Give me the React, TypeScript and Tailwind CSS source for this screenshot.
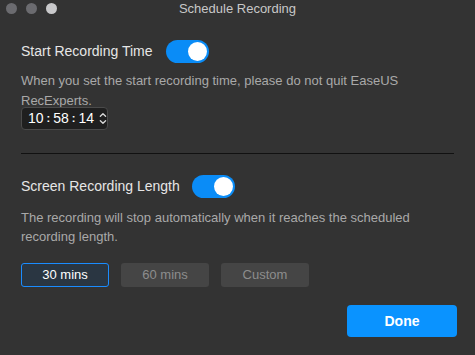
import React from "react"

function Toggle() {
  return (
    <div className="w-[43px] h-[23px] rounded-full bg-[#0a8cf7] flex items-center justify-end pr-[2px]">
      <div className="w-[19px] h-[19px] rounded-full bg-white" />
    </div>
  )
}

export default function App() {
  return (
    <div
      className="w-[475px] h-[355px] bg-[#333333] flex flex-col overflow-hidden"
      style={{ fontFamily: '"Liberation Sans", Arial, sans-serif' }}
    >
      {/* title bar */}
      <div className="h-[17px] relative flex items-center justify-center">
        <div className="absolute left-[6px] top-[3px] flex gap-[9px]">
          <span className="w-[11px] h-[11px] rounded-full bg-[#6b6b6f]" />
          <span className="w-[11px] h-[11px] rounded-full bg-[#6b6b6f]" />
          <span className="w-[11px] h-[11px] rounded-full bg-[#c9c9cb]" />
        </div>
        <span className="text-[13px] text-[#c8c8c8]">Schedule Recording</span>
      </div>

      <div className="px-[21px] flex flex-col">
        {/* start time */}
        <div className="mt-[23px] flex items-center gap-[13px]">
          <span className="text-[14px] text-[#e6e6e6]">Start Recording Time</span>
          <Toggle />
        </div>
        <p className="mt-[8px] text-[13px] leading-[20px] text-[#a9a9a9]">
          When you set the start recording time, please do not quit EaseUS RecExperts.
        </p>
        <div className="-mt-[4px] w-[87px] h-[23px] rounded-[4px] bg-[#1f1f1f] border border-[#4a4a4a] flex items-center pl-[6px] text-[14px] text-white">
          <span>10</span>
          <span className="mx-[3px] text-[11px] font-bold">:</span>
          <span>58</span>
          <span className="mx-[3px] text-[11px] font-bold">:</span>
          <span>14</span>
          <svg className="ml-[5px]" width="9" height="15" viewBox="0 0 9 15" fill="none" stroke="#d8d8d8" strokeWidth="1.5" strokeLinecap="round" strokeLinejoin="round">
            <path d="M1.5 5 L4.5 2 L7.5 5" />
            <path d="M1.5 10 L4.5 13 L7.5 10" />
          </svg>
        </div>

        <div className="mt-[23px] h-px bg-[#111111]" />

        {/* length */}
        <div className="mt-[21px] flex items-center gap-[12px]">
          <span className="text-[14px] text-[#e6e6e6]">Screen Recording Length</span>
          <Toggle />
        </div>
        <p className="mt-[10px] text-[13px] leading-[19px] text-[#a9a9a9]">
          The recording will stop automatically when it reaches the scheduled recording length.
        </p>

        <div className="mt-[17px] flex gap-[12px]">
          <button className="w-[88px] h-[24px] rounded-[3px] border border-[#1a8cff] bg-[#2a3642] text-[13px] text-white">
            30 mins
          </button>
          <button className="w-[88px] h-[24px] rounded-[3px] bg-[#454545] text-[13px] text-[#8d8d8d]">
            60 mins
          </button>
          <button className="w-[88px] h-[24px] rounded-[3px] bg-[#454545] text-[13px] text-[#8d8d8d]">
            Custom
          </button>
        </div>

        <div className="mt-[18px] flex justify-end">
          <button className="mr-[-3px] w-[110px] h-[32px] rounded-[4px] bg-[#0a93ff] text-[14px] font-bold text-white">
            Done
          </button>
        </div>
      </div>
    </div>
  )
}
